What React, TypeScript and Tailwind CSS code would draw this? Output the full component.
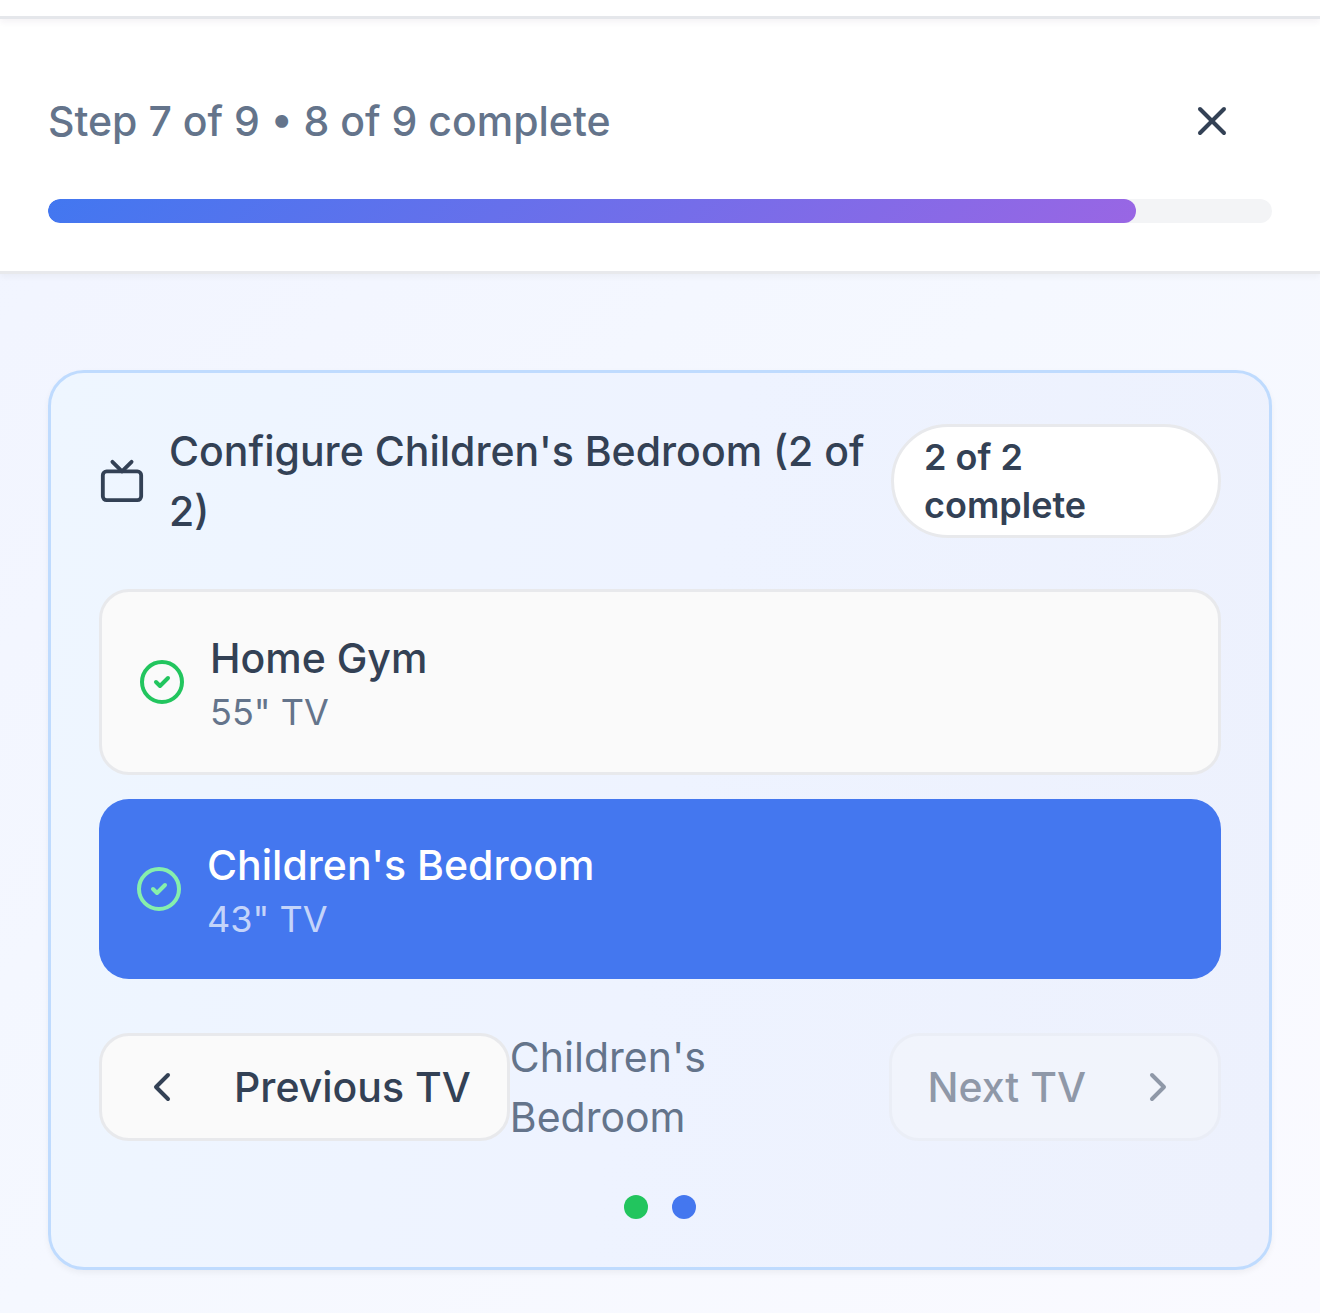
import { ChevronLeft, ChevronRight, CircleCheck, Tv, X } from "lucide-react";

type Room = { name: string; size: string; active: boolean };

const rooms: Room[] = [
  { name: "Home Gym", size: '55" TV', active: false },
  { name: "Children's Bedroom", size: '43" TV', active: true },
];

function StepHeader() {
  return (
    <header className="relative border-b-3 border-[#e8e9ec] bg-white p-12 shadow-[0_3px_6px_rgba(0,0,0,0.04)]">
      <div className="mb-6 flex items-center justify-between">
        <p className="text-[41px] leading-[60px] font-medium text-[#64748b]">Step 7 of 9 • 8 of 9 complete</p>
        <button type="button" aria-label="Close" className="flex h-[108px] items-center px-9 text-[#334155]">
          <X size={48} />
        </button>
      </div>
      <div
        role="progressbar"
        aria-label="Setup progress"
        aria-valuenow={89}
        className="h-6 overflow-hidden rounded-full bg-gray-100"
      >
        <div
          className="h-full rounded-full bg-[linear-gradient(135deg,#4277f0,#9966e4)]"
          style={{ width: `${(8 / 9) * 100}%` }}
        />
      </div>
    </header>
  );
}

function RoomButton({ room }: { room: Room }) {
  return (
    <button
      type="button"
      aria-pressed={room.active}
      className={
        room.active
          ? "flex w-full items-center gap-6 rounded-[30px] bg-[#4477ef] p-9 text-left text-white"
          : "flex w-full items-center gap-6 rounded-[30px] border-3 border-[#e8e9ec] bg-[#fafafa] p-9 text-left text-[#334155]"
      }
    >
      <CircleCheck size={48} className={room.active ? "shrink-0 text-[#86efac]" : "shrink-0 text-[#22c55e]"} />
      <span className="flex flex-col">
        <span className="text-[41px] leading-[60px] font-medium">{room.name}</span>
        <span
          className={
            room.active
              ? "text-[36px] leading-[48px] text-white/70"
              : "text-[36px] leading-[48px] text-[#64748b]"
          }
        >
          {room.size}
        </span>
      </span>
    </button>
  );
}

export default function App() {
  return (
    <div className="min-h-screen bg-[linear-gradient(135deg,#f1f4ff,#f5f8ff_50%,#fafaff)] font-['Inter',sans-serif]">
      <div className="relative z-10 h-[19px] border-b-3 border-gray-200 bg-white shadow-[0_3px_6px_rgba(60,30,90,0.06)]" />
      <StepHeader />
      <main className="px-12 pt-24 pb-[43px]">
        <section className="rounded-[36px] border-3 border-[#bfdbfe] bg-[linear-gradient(100deg,#eef6ff,#eef3ff_50%,#edf1fd)] p-12 shadow-[0_3px_6px_rgba(0,0,0,0.05)]">
          <div className="mb-12 flex items-center justify-between">
            <div className="flex items-center gap-6 text-[#334155]">
              <Tv size={46} className="shrink-0" />
              <h2 className="text-[41px] leading-[60px] font-medium">
                Configure Children's Bedroom (2 of <br />
                2)
              </h2>
            </div>
            <span className="w-[330px] shrink-0 rounded-full border-3 border-[#e8e9ec] bg-white px-[30px] py-1.5 text-[36px] leading-[48px] font-semibold text-[#334155]">
              2 of 2 <br />
              complete
            </span>
          </div>
          <div className="flex flex-col gap-6">
            {rooms.map((room) => (
              <RoomButton key={room.name} room={room} />
            ))}
          </div>
          <nav aria-label="TV navigation" className="mt-12 flex items-center justify-between">
            <button
              type="button"
              className="flex h-[108px] shrink-0 items-center gap-12 rounded-[30px] border-3 border-[#e8e9ec] bg-[#fafafa] px-9 text-[41px] leading-[60px] font-medium whitespace-nowrap text-[#334155]"
            >
              <ChevronLeft size={48} />
              Previous TV
            </button>
            <span className="flex-1 text-[41px] leading-[60px] text-[#64748b]">
              Children's <br />
              Bedroom
            </span>
            <button
              type="button"
              disabled
              className="flex h-[108px] shrink-0 items-center gap-12 rounded-[30px] border-3 border-[#e9ebf0] bg-[#f5f7fb] px-9 text-[41px] leading-[60px] font-medium whitespace-nowrap text-[#334155] opacity-50"
            >
              Next TV
              <ChevronRight size={48} />
            </button>
          </nav>
          <div className="mt-12 flex justify-center gap-6">
            <span className="size-6 rounded-full bg-[#22c55e]" />
            <span className="size-6 rounded-full bg-[#4477ef]" />
          </div>
        </section>
      </main>
    </div>
  );
}
